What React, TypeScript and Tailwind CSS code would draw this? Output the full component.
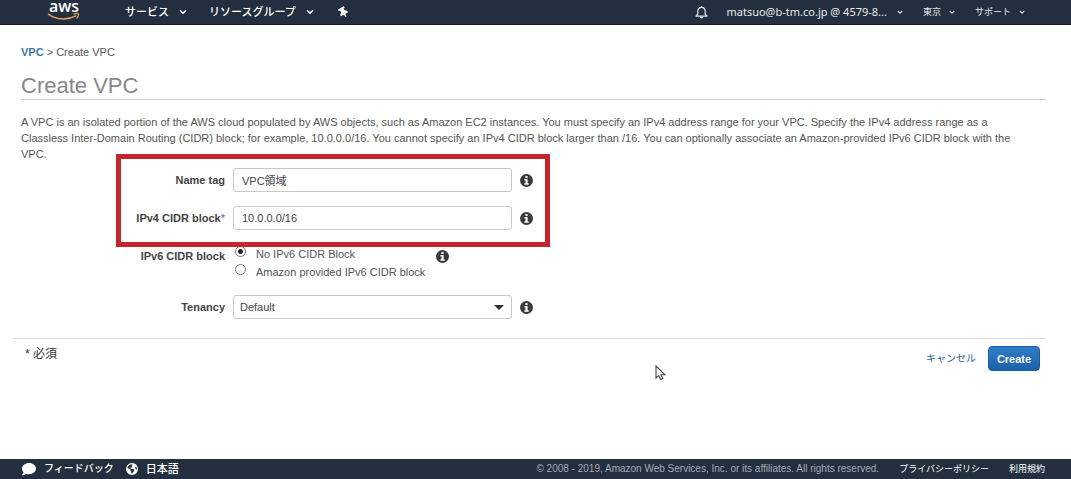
import type { ReactNode } from "react";
import { FaComment, FaThumbtack } from "react-icons/fa";
import { FaEarthAmericas } from "react-icons/fa6";

function Chevron({ className }: { className: string }) {
  return (
    <svg viewBox="0 0 8 6" fill="none" className={className} aria-hidden="true">
      <path d="M1 1.2 4 4.2 7 1.2" stroke="currentColor" strokeWidth="1.5" />
    </svg>
  );
}

function BellIcon() {
  return (
    <svg viewBox="0 0 13 13" fill="none" className="size-[13px]" aria-hidden="true">
      <path
        d="M1 10.2h11L10.2 8V5.2C10.2 3 8.7 1.4 6.5 1.4S2.8 3 2.8 5.2V8L1 10.2Z"
        stroke="currentColor"
        strokeWidth="1.2"
        strokeLinejoin="round"
      />
      <path d="M6.5 0v1.4" stroke="currentColor" strokeWidth="1.3" />
      <path d="M4.8 10.8h3.4a1.7 1.7 0 0 1-3.4 0Z" fill="currentColor" />
    </svg>
  );
}

function AwsLogo() {
  return (
    <a href="#home" aria-label="aws">
      <svg viewBox="0 0 34 24" fill="none" className="h-6 w-[34px]">
        <text
          x="17"
          y="12"
          textAnchor="middle"
          fill="#fff"
          className="font-['Open_Sans',sans-serif] text-[16px] font-semibold"
        >
          aws
        </text>
        <path d="M1 13.8C9 19.8 20 20.6 29.4 15.6" stroke="#e0a060" strokeWidth="1.5" />
        <path d="M26.4 14.1c2-0.7 4.6-0.8 5-0.2 0.4 0.7-0.4 3-1.8 4.4" stroke="#e0a060" strokeWidth="1.2" />
      </svg>
    </a>
  );
}

interface FieldProps {
  label: string;
  htmlFor: string;
  required?: boolean;
  children: ReactNode;
}

function Field({ label, htmlFor, required, children }: FieldProps) {
  return (
    <div className="grid grid-cols-[204px_279px_auto] items-center justify-start gap-x-2">
      <label htmlFor={htmlFor} className="text-right font-bold text-[#444]">
        {label}
        {required && <span className="font-normal text-[#3b6e99]">*</span>}
      </label>
      {children}
      <InfoButton label={label} />
    </div>
  );
}

function InfoButton({ label }: { label: string }) {
  return (
    <button type="button" aria-label={label} className="text-[#3a3a3a]">
      <svg viewBox="0 0 13 13" className="size-[13px]" aria-hidden="true">
        <circle cx="6.5" cy="6.5" r="6.5" fill="currentColor" />
        <path d="M5.4 2h2.2v2H5.4ZM4.4 5h3.2v4.2h1.1v1.6H4.4V9.2h1.1V6.6H4.4Z" fill="#fff" />
      </svg>
    </button>
  );
}

const inputClass =
  "h-6 w-full rounded-[3px] border border-[#c9c9c9] bg-white px-2 text-[#444] outline-none";

const radioClass =
  "size-[11px] appearance-none rounded-full border border-[#777] bg-white checked:bg-[radial-gradient(circle,#222_0_2px,#fff_3px)]";

export default function App() {
  return (
    <div className="flex min-h-screen flex-col bg-white font-['Liberation_Sans','Noto_Sans_CJK_JP',sans-serif] text-[11px] leading-4 text-[#555]">
      {/* Top navigation */}
      <header className="flex h-[25px] items-center justify-between border-b border-[#151c27] bg-[#232f3e] pr-[46px] pl-[47px] text-white">
        <nav className="flex items-center">
          <AwsLogo />
          <button type="button" className="ml-11 flex items-center gap-2.5 font-medium">
            サービス
            <Chevron className="w-2" />
          </button>
          <button type="button" className="ml-[22px] flex items-center gap-2.5 font-medium">
            リソースグループ
            <Chevron className="w-2" />
          </button>
          <button type="button" aria-label="ピン" className="ml-6">
            <FaThumbtack className="size-[11px] -rotate-30" />
          </button>
        </nav>
        <div className="flex items-center text-[9px] text-[#e6e8ea]">
          <button type="button" aria-label="通知" className="mr-[18px]">
            <BellIcon />
          </button>
          <button type="button" className="flex items-center gap-2.5 font-['Noto_Sans',sans-serif] text-[11px]">
            matsuo@b-tm.co.jp @ 4579-8...
            <Chevron className="w-1.5" />
          </button>
          <button type="button" className="ml-5 flex items-center gap-2">
            東京
            <Chevron className="w-1.5" />
          </button>
          <button type="button" className="ml-5 flex items-center gap-2">
            サポート
            <Chevron className="w-1.5" />
          </button>
        </div>
      </header>

      <main className="relative grow pt-[19px] pr-[25px] pl-[21px]">
        <nav>
          <a href="#vpc" className="font-bold text-[#3b7aa8]">
            VPC
          </a>{" "}
          &gt; Create VPC
        </nav>

        <h1 className="mt-[14px] border-b border-[#ccc] pb-px text-[22px] leading-6 text-[#888]">
          Create VPC
        </h1>

        <p className="mt-[14px] pr-4">
          A VPC is an isolated portion of the AWS cloud populated by AWS objects, such as Amazon EC2
          instances. You must specify an IPv4 address range for your VPC. Specify the IPv4 address
          range as a Classless Inter-Domain Routing (CIDR) block; for example, 10.0.0.0/16. You
          cannot specify an IPv4 CIDR block larger than /16. You can optionally associate an
          Amazon-provided IPv6 CIDR block with the VPC.
        </p>

        <form onSubmit={(e) => e.preventDefault()}>
          <div className="relative flex flex-col gap-[14px] pt-1.5">
            {/* Highlight around the two fields to fill in */}
            <div className="pointer-events-none absolute -top-2 left-[95px] h-[93px] w-[434px] border-[5px] border-[#c4262e]" />
            <Field label="Name tag" htmlFor="name-tag">
              <input id="name-tag" defaultValue="VPC領域" className={inputClass} />
            </Field>
            <Field label="IPv4 CIDR block" htmlFor="ipv4" required>
              <input id="ipv4" defaultValue="10.0.0.0/16" className={inputClass} />
            </Field>
          </div>

          <div
            role="radiogroup"
            aria-labelledby="ipv6-label"
            className="mt-4 grid grid-cols-[204px_195px_auto] items-start justify-start gap-x-2"
          >
            <span id="ipv6-label" className="pt-0.5 text-right font-bold text-[#444]">
              IPv6 CIDR block
            </span>
            <div className="flex flex-col gap-0.5 pl-0.5">
              <label className="flex items-start gap-2.5">
                <input type="radio" name="ipv6" defaultChecked className={radioClass} />
                No IPv6 CIDR Block
              </label>
              <label className="flex items-start gap-2.5">
                <input type="radio" name="ipv6" className={radioClass} />
                Amazon provided IPv6 CIDR block
              </label>
            </div>
            <span className="flex pt-1">
              <InfoButton label="IPv6 CIDR block" />
            </span>
          </div>

          <div className="mt-[15px]">
            <Field label="Tenancy" htmlFor="tenancy">
              <div className="relative">
                <select
                  id="tenancy"
                  className="h-6 w-full appearance-none rounded-[3px] border border-[#c9c9c9] bg-white px-1.5 text-[#444] outline-none"
                >
                  <option>Default</option>
                </select>
                <span className="pointer-events-none absolute top-2.5 right-2 border-x-[5px] border-t-[5px] border-x-transparent border-t-[#333]" />
              </div>
            </Field>
          </div>

          <div className="mt-[19px] -ml-2 flex items-start justify-between border-t border-[#ddd] pt-[7px] pr-1.5 pl-3">
            <span className="text-[12px] text-[#333]">* 必須</span>
            <div className="flex items-center gap-3">
              <a href="#cancel" className="text-[10px] text-[#1f6391]">
                キャンセル
              </a>
              <button
                type="submit"
                className="h-[25px] w-[52px] rounded-[4px] border border-[#1c5c9e] bg-linear-to-b from-[#2f7cc9] to-[#1c62ab] font-bold text-white"
              >
                Create
              </button>
            </div>
          </div>
        </form>

        {/* Mouse pointer */}
        <svg viewBox="0 0 11 16" className="absolute top-[340px] left-[655px] h-4 w-[11px]" aria-hidden="true">
          <path
            d="M1 1v12l2.8-2.4 1.8 4 2.2-1-1.8-3.8H10L1 1Z"
            fill="#fff"
            stroke="#444"
            strokeWidth="1.1"
          />
        </svg>
      </main>

      <footer className="flex h-5 items-center justify-between bg-[#232f3e] pr-[26px] pl-[22px] text-white">
        <div className="flex items-center">
          <a href="#feedback" className="flex items-center gap-2 text-[10px] font-medium">
            <FaComment className="size-3.5" />
            フィードバック
          </a>
          <button type="button" className="ml-3 flex items-center gap-2 font-medium">
            <FaEarthAmericas className="size-3" />
            日本語
          </button>
        </div>
        <div className="flex items-center gap-5 text-[9px]">
          <span className="text-[10px] text-[#a5abb3]">
            © 2008 - 2019, Amazon Web Services, Inc. or its affiliates. All rights reserved.
          </span>
          <a href="#privacy">プライバシーポリシー</a>
          <a href="#terms">利用規約</a>
        </div>
      </footer>
    </div>
  );
}
